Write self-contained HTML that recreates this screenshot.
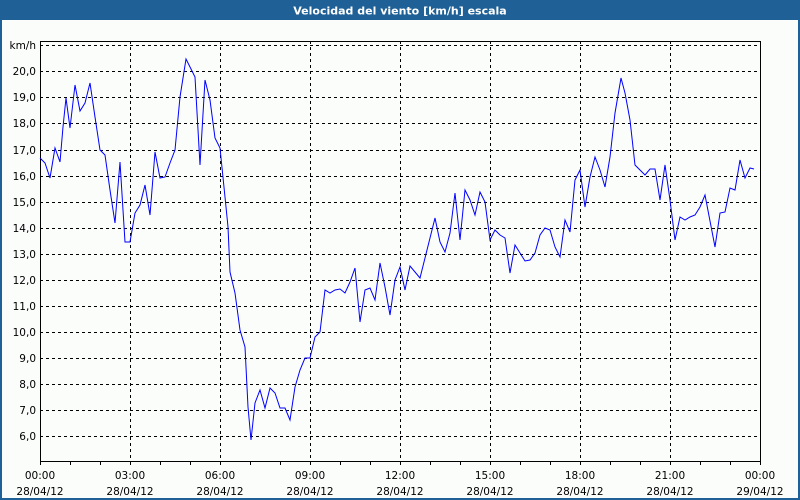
<!DOCTYPE html>
<html><head><meta charset="utf-8"><style>
html,body{margin:0;padding:0;width:800px;height:500px;overflow:hidden;background:#fbfdfb}
svg{display:block}
text{font-family:"DejaVu Sans","Liberation Sans",sans-serif;font-size:10.5px;fill:#000}
</style></head><body>
<svg width="800" height="500" viewBox="0 0 800 500" xmlns="http://www.w3.org/2000/svg">
<rect x="0" y="0" width="800" height="500" fill="#fbfdfb"/>
<rect x="0" y="0" width="800" height="20" fill="#1f6096"/>
<rect x="0" y="0" width="2" height="500" fill="#1f6096"/>
<rect x="798" y="0" width="2" height="500" fill="#1f6096"/>
<rect x="0" y="498" width="800" height="2" fill="#1f6096"/>
<text x="400" y="14.5" text-anchor="middle" style="font-weight:bold;fill:#fff;font-size:11px">Velocidad del viento [km/h] escala</text>
<g stroke="#000" stroke-width="1" stroke-dasharray="3,3" fill="none">
<path d="M40 45.5H760M40 71.5H760M40 97.5H760M40 123.5H760M40 150.5H760M40 176.5H760M40 202.5H760M40 228.5H760M40 254.5H760M40 280.5H760M40 306.5H760M40 332.5H760M40 358.5H760M40 384.5H760M40 410.5H760M40 436.5H760"/>
<path d="M130.5 41V461M220.5 41V461M310.5 41V461M400.5 41V461M490.5 41V461M580.5 41V461M670.5 41V461"/>
</g>
<rect x="40.5" y="41.5" width="720" height="420" fill="none" stroke="#000" stroke-width="1"/>
<path stroke="#000" d="M70.5 461v4M100.5 461v4M130.5 461v4M160.5 461v4M190.5 461v4M220.5 461v4M250.5 461v4M280.5 461v4M310.5 461v4M340.5 461v4M370.5 461v4M400.5 461v4M430.5 461v4M460.5 461v4M490.5 461v4M520.5 461v4M550.5 461v4M580.5 461v4M610.5 461v4M640.5 461v4M670.5 461v4M700.5 461v4M730.5 461v4M40.5 461v4M760.5 461v4"/>
<polyline fill="none" stroke="#0000ff" stroke-width="1" points="40,158 45,163 50,178 55,148 60,162 63,127 66,98 70,128 75,85 80,111 85,103 90,83 95,117 100,150 105,155 110,190 115,223 120,162 125,242 130,242 135,213 140,205 145,185 150,215 155,152 160,178 165,177 170,163 175,150 180,97 186,59 190,67 195,77 200,165 205,80 210,100 215,138 220,148 225,197 228,227 230,272 235,293 240,330 245,347 248,407 251,440 255,403 260,390 265,408 270,388 275,393 280,408 285,408 290,420 295,387 300,370 305,358 310,358 315,337 320,332 325,290 330,293 335,290 340,289 345,293 350,282 355,268 360,322 365,290 370,288 375,300 380,263 385,287 390,315 395,280 400,267 405,290 410,266 420,278 425,258 430,238 435,218 440,242 445,252 450,233 455,193 460,240 465,190 470,200 475,215 480,192 485,202 490,240 495,230 500,235 505,238 510,273 515,245 520,253 525,261 530,260 535,253 540,235 545,228 550,230 555,247 560,257 565,220 570,232 575,180 580,170 585,207 590,177 595,157 600,170 605,187 610,157 615,113 621,78 625,93 630,120 635,165 640,170 645,175 650,169 655,169 660,200 665,165 670,200 675,240 680,217 685,220 690,217 695,215 700,207 705,195 715,247 720,213 725,212 730,188 735,190 740,160 745,178 750,168 754,169"/>
<g text-anchor="end">
<text x="36" y="49">km/h</text>
<text x="36" y="75">20,0</text>
<text x="36" y="101">19,0</text>
<text x="36" y="127">18,0</text>
<text x="36" y="154">17,0</text>
<text x="36" y="180">16,0</text>
<text x="36" y="206">15,0</text>
<text x="36" y="232">14,0</text>
<text x="36" y="258">13,0</text>
<text x="36" y="284">12,0</text>
<text x="36" y="310">11,0</text>
<text x="36" y="336">10,0</text>
<text x="36" y="362">9,0</text>
<text x="36" y="388">8,0</text>
<text x="36" y="414">7,0</text>
<text x="36" y="440">6,0</text>
</g>
<g text-anchor="middle">
<text x="40" y="479">00:00</text><text x="40" y="495">28/04/12</text>
<text x="130" y="479">03:00</text><text x="130" y="495">28/04/12</text>
<text x="220" y="479">06:00</text><text x="220" y="495">28/04/12</text>
<text x="310" y="479">09:00</text><text x="310" y="495">28/04/12</text>
<text x="400" y="479">12:00</text><text x="400" y="495">28/04/12</text>
<text x="490" y="479">15:00</text><text x="490" y="495">28/04/12</text>
<text x="580" y="479">18:00</text><text x="580" y="495">28/04/12</text>
<text x="670" y="479">21:00</text><text x="670" y="495">28/04/12</text>
<text x="760" y="479">00:00</text><text x="760" y="495">29/04/12</text>
</g>
</svg>
</body></html>
